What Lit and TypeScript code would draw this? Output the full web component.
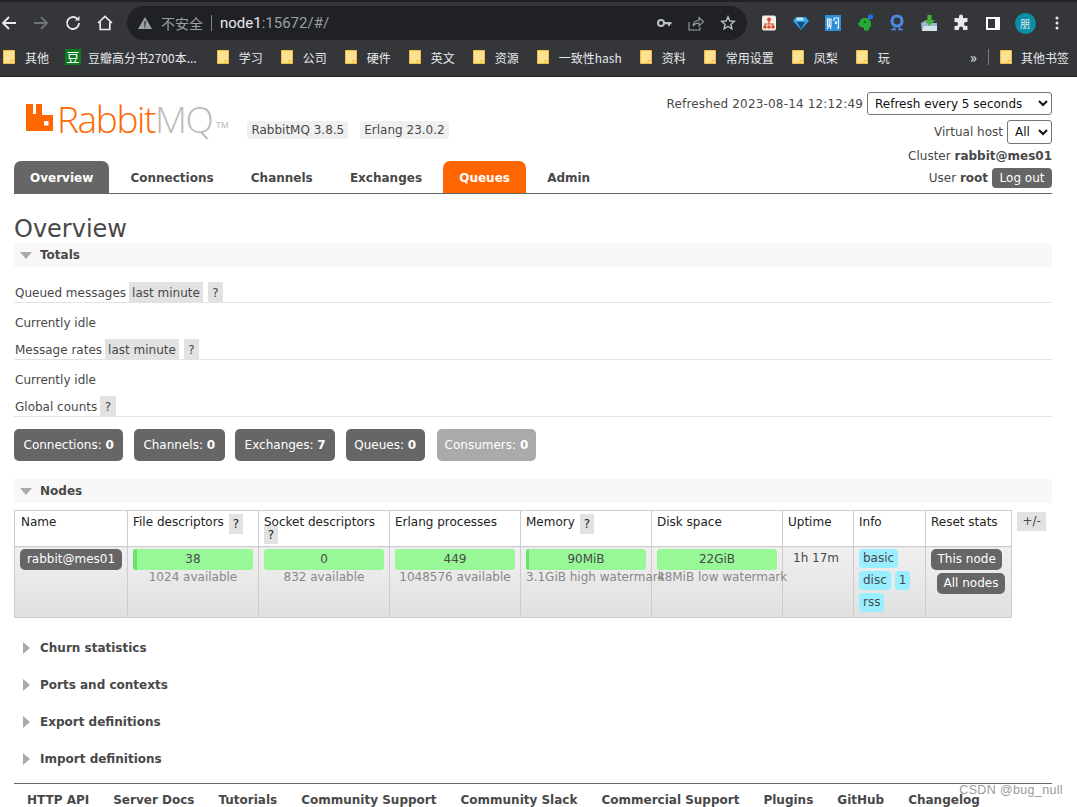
import { LitElement, html, css, svg } from "lit";
import { customElement } from "lit/decorators.js";

const folder = html`<svg class="folder" width="12" height="14" viewBox="0 0 12 14"><path d="M.5.5h11v13H.5z" fill="#fde293" stroke="#f2bd42"/><path d="M8 13.5v-3h3.5" fill="none" stroke="#f2bd42"/></svg>`;

const bookmarks: [string, number?][] = [["其他"], ["豆瓣高分书2700本...", 1], ["学习"], ["公司"], ["硬件"], ["英文"], ["资源"], ["一致性hash"], ["资料"], ["常用设置"], ["凤梨"], ["玩"]];

const ext = [
  svg`<rect x="2" y="1.500" width="14" height="15" rx="2" fill="#f3efe9"/><circle cx="9" cy="5.500" r="2" fill="#e0492c"/><path d="M9 7v3M5 13v-3h8v3" fill="none" stroke="#e0492c" stroke-width="1.200"/><circle cx="5" cy="13" r="1.800" fill="#e0492c"/><circle cx="9" cy="13" r="1.800" fill="#e0492c"/><circle cx="13" cy="13" r="1.800" fill="#e0492c"/>`,
  svg`<path d="M4 3h10l3 4-8 9-8-9z" fill="#2f9ee6"/><path d="M5.500 3.500h5l2 3h-9z" fill="#bfe6fb"/><path d="M5 8h8l-4 7z" fill="#0b4f80"/>`,
  svg`<rect x="1" y="1" width="16" height="16" fill="#2d8fd8"/><path d="M3.500 5h3.500v7H3.500zM5.200 5v7M3 15l2-3M7 15l-1-3M9.500 7l1-3h4v10h-2M11 8l2 2M13 7l-2 3" fill="none" stroke="#e8f2fb" stroke-width="1.200"/>`,
  svg`<path d="M2 9l2-1V6l3-2h5l3 4v4l-2 2v2l-3 1-2-1v-2l-3-1-2-1z" fill="#25a83a"/><circle cx="14.500" cy="2.800" r="2.600" fill="#1a73e8"/><circle cx="9" cy="8" r="1" fill="#0d5a1d"/>`,
  svg`<circle cx="9" cy="7" r="5" fill="none" stroke="#4d88e0" stroke-width="3.200"/><path d="M5 16l2-3.500M13 16l-2-3.500M3 15.500h5M10 15.500h5" fill="none" stroke="#4d88e0" stroke-width="1.300"/>`,
  svg`<path d="M1 9l6-3v3h10v8H2z" fill="#9db7cf"/><path d="M4 12h13v5H2z" fill="#d4e2ee"/><path d="M7.500 1h4v5H15l-5.500 6L4 6h3.500z" fill="#46b03f"/>`,
  svg`<path d="M7 2.500a2 2 0 0 1 4 0V4h4.500v4H14a2 2 0 0 0 0 4h1.500v4H11v-1.500a2 2 0 0 0-4 0V16H2.500v-4H4a2 2 0 0 0 0-4H2.500V4H7z" fill="#e8eaed"/>`,
  svg`<rect x="2" y="3" width="14" height="13" fill="#fff"/><rect x="4" y="5" width="7" height="9" fill="#35363a"/>`,
];

@customElement("app-root")
export class AppRoot extends LitElement {
  static styles = css`
    :host { display: block; height: 807px; overflow: hidden; position: relative; background: #fff;
      font-family: "DejaVu Sans", Verdana, sans-serif; font-size: 12px; color: #484848; }
    .tabstrip { height: 2px; background: #202124; }
    .toolbar { height: 42px; background: #35363a; display: flex; align-items: center; }
    .nav { width: 32px; display: flex; justify-content: center; }
    .nav.back { width: 18px; margin-right: 7px; }
    .omni { margin-left: 6px; width: 620px; height: 34px; border-radius: 17px; background: #202124; display: flex; align-items: center;
      padding: 0 10px; box-sizing: border-box; font: 14px "Noto Sans CJK SC", "Liberation Sans", sans-serif; color: #9aa0a6; }
    .omni .warn { margin-right: 8px; }
    .omni .insecure { font-size: 14px; }
    .omni .sep { width: 1px; height: 16px; background: #80868b; margin: 0 8px; }
    .omni .host { color: #e8eaed; }
    .omni .url { font-family: "Roboto", "Liberation Sans", sans-serif; font-size: 15px; }
    .omni .end { margin-left: auto; display: flex; gap: 16px; align-items: center; padding-right: 1px; }
    .exts { display: flex; align-items: center; margin-left: 13px; gap: 14px; }
    .avatar { width: 21px; height: 21px; border-radius: 50%; background: #0b8fa8; color: #e8eaed; font: 10px/21px "Noto Sans CJK SC", sans-serif; text-align: center; margin-left: -1.500px; }
    .dots { margin-left: 19.500px; }
    .bookbar { padding: 0 0 6px 3px; box-sizing: border-box; height: 33px; background: #35363a; border-bottom: 1px solid #1f1f21; display: flex; align-items: center;
      font: 12px "Noto Sans CJK SC", "Liberation Sans", sans-serif; color: #e8eaed; }
    .bm { display: flex; align-items: center; gap: 10px; margin-right: 18px; white-space: nowrap; }
    .bm:first-child { margin-right: 16px; }
    .bm.first-dou { gap: 7px; margin-right: 20px; }
    .dou { width: 16px; height: 16px; background: #0e7a22; color: #fff; font-size: 13px; line-height: 16px; text-align: center; }
    .folder { flex: none; }
    .bm-right { margin-left: auto; display: flex; align-items: center; padding-right: 8px; }
    .more { margin-right: 11px; font-size: 15px; line-height: 16px; }
    .bm-sep { width: 1px; height: 16px; background: #7a7d82; margin-right: 11px; }
    .bm-right .bm { margin-right: 0; gap: 9px; }

    .page { padding: 0 25px 0 14px; position: relative; }
    .head { display: flex; justify-content: space-between; height: 84px; }
    .brand { display: flex; align-items: flex-start; padding: 25px 0 0 12px; }
    .logo { display: flex; align-items: flex-end; height: 34px; font: 37px/34px "Open Sans", "Liberation Sans", sans-serif; letter-spacing: -1.400px; font-weight: 300; }
    .logo svg { margin: 0 4px 5px 0; }
    .rabbit { color: #f60; }
    .mq { color: #bbb; }
    .tm { font: 9px "Liberation Sans", sans-serif; color: #bbb; letter-spacing: 0; margin: 0 0 6px 3px; }
    .ver { display: flex; gap: 12px; margin: 19px 0 0 19px; }
    .ver span { background: #f0f0f0; border-radius: 3px; padding: 2px 4px; line-height: 14px; color: #484848; }
    .status { text-align: right; padding-top: 15px; line-height: 14px; }
    .status .row { display: flex; justify-content: flex-end; align-items: center; }
    .status .r1 { height: 23px; gap: 4px; }
    .status .r1 span { letter-spacing: .17px; }
    .status .r2 { height: 24px; gap: 4px; margin-top: 5px; }
    .status .r3 { height: 22px; margin-top: 1px; }
    .status select { font: 12px "DejaVu Sans", sans-serif; background: #fff; color: #111; border: 1px solid #767676; border-radius: 3px; height: 100%; padding: 0 0 0 3px; }
    .logout { background: #666; color: #fff; border-radius: 4px; padding: 0 7.500px; line-height: 20px; }

    nav { display: flex; border-bottom: 1px solid #666; height: 32px; align-items: stretch; position: relative; }
    nav a { padding: 0 16px; margin-right: 5.200px; font-weight: 700; line-height: 35px; font-size: 12px; color: #484848; border-radius: 7px 7px 0 0; }
    nav a.on { background: #666; color: #fff; }
    nav a.q { background: #f60; color: #fff; }
    nav .user { margin: 2px 0 0 auto; display: flex; align-items: center; gap: 4px; font-weight: 400; }

    h1 { font: 400 24px/28px "DejaVu Sans", sans-serif; margin: 21px 0 0; color: #484848; }
    .sec { background: #f8f8f8; height: 24px; display: flex; align-items: center; font-weight: 700; font-size: 12px; padding-left: 6px; gap: 8px; }
    .tri-d { width: 0; height: 0; border: 6px solid transparent; border-top: 7px solid #aaa; border-bottom: 0; margin-top: 1px; }
    .tri-r { width: 0; height: 0; border: 6px solid transparent; border-left: 7px solid #aaa; border-right: 0; margin-left: 3px; margin-right: 2px; }
    .lbl { display: flex; align-items: flex-start; gap: 3px; height: 20px; padding-left: 1px; border-bottom: 1px solid #e2e2e2; white-space: nowrap; line-height: 22px; }
    .tag { background: #e2e2e2; padding: 0 3px; height: 20px; }
    .q-mark { background: #e2e2e2; padding: 0 4.500px; height: 20px; line-height: 20px; margin-left: 1px; }
    .lbl .q-mark { margin-left: 2px; line-height: 22px; }
    .idle { line-height: 14px; padding-left: 1px; margin-top: 13px; }
    .l1 { margin-top: 15px; }
    .l2, .l3 { margin-top: 9px; }
    .counts { display: flex; gap: 10.500px; margin-top: 12px; }
    .counts span { background: #666; color: #fff; border-radius: 5px; padding: 0 9.500px; height: 32px; line-height: 32px; }
    .counts span.tight { padding: 0 8.500px; }
    .counts span.off { background: #aaa; margin-left: 1.500px; padding: 0 8px; }
    .counts b { font-weight: 700; }
    .nodes-head { margin-top: 18px; }
    .table-row { display: flex; align-items: flex-start; margin-top: 7px; gap: 5px; }
    table { border-collapse: collapse; table-layout: fixed; width: 997px; }
    th, td { border: 1px solid #ccc; box-sizing: border-box; font-weight: 400; text-align: left; padding: 0; vertical-align: top; white-space: nowrap; }
    th { height: 36px; padding: 4px 5px 0; line-height: 14px; color: #222; background: #fff; position: relative; }
    th:first-child { padding-left: 6px; }
    th .q-mark { display: inline-block; height: 20px; line-height: 20px; margin-left: 1px; padding: 0 4px; vertical-align: top; margin-top: -1px; }
    th .wrap { display: block; height: 14px; }
    th .under { display: block; height: 18px; line-height: 18px; width: 14px; text-align: center; background: #e2e2e2; margin-top: -3px; position: relative; }
    tr.body td { height: 71px; background: linear-gradient(#f0f0f0, #e0e0e0); padding: 2px 5px 0; }
    .pill { background: #666; color: #fff; border-radius: 5px; line-height: 21px; height: 21px; text-align: center; }
    .bar { background: #98f898; border-radius: 3px; height: 21px; line-height: 21px; text-align: center; color: #484848; position: relative; overflow: hidden; }
    .bar i { position: absolute; left: 0; top: 0; bottom: 0; background: #6ae26a; }
    .sub { text-align: center; color: #888; line-height: 15px; }
    .sub.left { text-align: left; }
    .up { padding-left: 5px; line-height: 18px; }
    .infos { display: flex; flex-wrap: wrap; gap: 3px 4px; width: 60px; }
    .infos span { background: #9ef; border-radius: 4px; padding: 0 4px; line-height: 19px; height: 19px; color: #484848; }
    .reset { display: flex; flex-direction: column; align-items: flex-start; gap: 3px; }
    .reset span { background: #666; color: #fff; border-radius: 5px; padding: 0 6.500px; line-height: 21px; height: 21px; }
    .reset span + span { margin-left: 6px; }
    .plus { flex: none; background: #e2e2e2; padding: 0 5.500px; line-height: 19px; height: 19px; margin-top: 2px; }
    .coll { margin-top: 19px; height: 18px; display: flex; align-items: center; gap: 8px; font-weight: 700; padding-left: 6px; }
    .coll.c1 { margin-top: 21px; }
    footer { margin-top: 15px; border-top: 1px solid #666; padding: 9px 0 0 13px; display: flex; gap: 24px; font-weight: 700; white-space: nowrap; line-height: 14px; }
    .mark { position: absolute; right: 14px; top: 783px; font: 12.500px "Liberation Sans", sans-serif; letter-spacing: .35px; color: #9a9a9a; }
  `;

  render() {
    return html`
      <div class="tabstrip"></div>
      <div class="toolbar">
        <div class="nav back"><svg width="18" height="18" viewBox="0 0 18 18" fill="none" stroke="#e8eaed" stroke-width="1.800"><path d="M16 9H3M9 3L3 9l6 6"/></svg></div>
        <div class="nav"><svg width="18" height="18" viewBox="0 0 18 18" fill="none" stroke="#6f7276" stroke-width="1.800"><path d="M2 9h13M9 3l6 6-6 6"/></svg></div>
        <div class="nav"><svg width="18" height="18" viewBox="0 0 18 18" fill="none" stroke="#e8eaed" stroke-width="1.800"><path d="M15 9a6 6 0 1 1-1.800-4.300"/><path d="M15.500 2v4.500H11" fill="#e8eaed" stroke="none"/></svg></div>
        <div class="nav"><svg width="18" height="18" viewBox="0 0 18 18" fill="none" stroke="#e8eaed" stroke-width="1.700"><path d="M2 9l7-6.500L16 9M4.200 8v7.500h9.600V8"/></svg></div>
        <div class="omni">
          <svg class="warn" width="16" height="16" viewBox="0 0 16 16"><path d="M8 2l7 12H1z" fill="#9aa0a6"/><path d="M7.400 6h1.200v4.500H7.400zM7.400 11.200h1.200v1.200H7.400z" fill="#202124"/></svg>
          <span class="insecure">不安全</span><span class="sep"></span>
          <span class="url"><span class="host">node1</span>:15672/#/</span>
          <span class="end">
            <svg width="15" height="10" viewBox="0 0 15 10"><circle cx="4" cy="5" r="3" fill="none" stroke="#bdc1c6" stroke-width="2"/><path d="M7 4h7.500v2.200h-1.500V8h-2V6.200H7z" fill="#bdc1c6"/></svg>
            <svg width="16" height="16" viewBox="0 0 16 16" fill="none" stroke="#9aa0a6" stroke-width="1.100"><path d="M1 7v8h11v-3M5 11c.5-3.500 3-5.500 6-5.500V2.500l4.500 4.300-4.500 4V8c-2.500 0-4.500 1-6 3z"/></svg>
            <svg width="16" height="16" viewBox="0 0 16 16" fill="none" stroke="#bdc1c6" stroke-width="1.400"><path d="M8 1.800l1.800 4.200 4.500.4-3.400 3 1 4.400L8 11.500l-3.900 2.300 1-4.400-3.400-3 4.500-.4z"/></svg>
          </span>
        </div>
        <div class="exts">
          ${ext.map((e) => html`<svg width="18" height="18" viewBox="0 0 18 18">${e}</svg>`)}
          <div class="avatar">朋</div>
        </div>
        <svg class="dots" width="4" height="14" viewBox="0 0 4 14" fill="#e8eaed"><circle cx="2" cy="2" r="1.500"/><circle cx="2" cy="7" r="1.500"/><circle cx="2" cy="12" r="1.500"/></svg>
      </div>
      <div class="bookbar">
        ${bookmarks.map(([t, d]) => html`<div class="bm ${d ? "first-dou" : ""}">${d ? html`<span class="dou">豆</span>` : folder}<span>${t}</span></div>`)}
        <div class="bm-right"><span class="more">»</span><span class="bm-sep"></span><div class="bm">${folder}<span>其他书签</span></div></div>
      </div>
      <div class="page">
        <div class="head">
          <div class="brand">
            <div class="logo">
              <svg width="27" height="27" viewBox="0 0 27 27"><path d="M0 0h7v10h3V0h6v11h11v16H0z" fill="#f60"/><rect x="18" y="17" width="4.500" height="4.500" fill="#fff"/></svg>
              <span class="rabbit">Rabbit</span><span class="mq">MQ</span><span class="tm">TM</span>
            </div>
            <div class="ver"><span>RabbitMQ 3.8.5</span><span>Erlang 23.0.2</span></div>
          </div>
          <div class="status">
            <div class="row r1"><span>Refreshed 2023-08-14 12:12:49</span>
              <select style="width:185px"><option>Refresh every 5 seconds</option></select></div>
            <div class="row r2"><span>Virtual host</span><select style="width:45px"><option>All</option></select></div>
            <div class="row r3"><span>Cluster <b>rabbit@mes01</b></span></div>
          </div>
        </div>
        <nav>
          <a class="on">Overview</a><a>Connections</a><a>Channels</a><a>Exchanges</a><a class="q">Queues</a><a>Admin</a>
          <div class="user"><span>User <b>root</b></span><span class="logout">Log out</span></div>
        </nav>
        <h1>Overview</h1>
        <div class="sec"><span class="tri-d"></span>Totals</div>
        <div class="lbl l1">Queued messages <span class="tag">last minute</span><span class="q-mark">?</span></div>
        <div class="idle">Currently idle</div>
        <div class="lbl l2">Message rates <span class="tag">last minute</span><span class="q-mark">?</span></div>
        <div class="idle">Currently idle</div>
        <div class="lbl l3">Global counts <span class="q-mark" style="margin-left:0">?</span></div>
        <div class="counts">
          <span>Connections: <b>0</b></span><span>Channels: <b>0</b></span><span>Exchanges: <b>7</b></span><span class="tight">Queues: <b>0</b></span><span class="off">Consumers: <b>0</b></span>
        </div>
        <div class="sec nodes-head"><span class="tri-d"></span>Nodes</div>
        <div class="table-row">
          <table>
            <colgroup><col style="width:113px"/><col style="width:131px"/><col style="width:131px"/><col style="width:131px"/><col style="width:131px"/><col style="width:131px"/><col style="width:71px"/><col style="width:72px"/><col style="width:86px"/></colgroup>
            <tr>
              <th>Name</th>
              <th>File descriptors <span class="q-mark">?</span></th>
              <th><span class="wrap">Socket descriptors</span><span class="under">?</span></th>
              <th>Erlang processes</th>
              <th>Memory <span class="q-mark">?</span></th>
              <th>Disk space</th>
              <th>Uptime</th>
              <th>Info</th>
              <th>Reset stats</th>
            </tr>
            <tr class="body">
              <td><div class="pill">rabbit@mes01</div></td>
              <td><div class="bar"><i style="width:4px"></i>38</div><div class="sub">1024 available</div></td>
              <td><div class="bar">0</div><div class="sub">832 available</div></td>
              <td><div class="bar">449</div><div class="sub">1048576 available</div></td>
              <td><div class="bar"><i style="width:3px"></i>90MiB</div><div class="sub left">3.1GiB high watermark</div></td>
              <td><div class="bar">22GiB</div><div class="sub left">48MiB low watermark</div></td>
              <td><div class="up">1h 17m</div></td>
              <td><div class="infos"><span>basic</span><span>disc</span><span>1</span><span>rss</span></div></td>
              <td><div class="reset"><span>This node</span><span>All nodes</span></div></td>
            </tr>
          </table>
          <span class="plus">+/-</span>
        </div>
        <div class="coll c1"><span class="tri-r"></span>Churn statistics</div>
        <div class="coll"><span class="tri-r"></span>Ports and contexts</div>
        <div class="coll"><span class="tri-r"></span>Export definitions</div>
        <div class="coll"><span class="tri-r"></span>Import definitions</div>
        <footer><span>HTTP API</span><span>Server Docs</span><span>Tutorials</span><span>Community Support</span><span>Community Slack</span><span>Commercial Support</span><span>Plugins</span><span>GitHub</span><span>Changelog</span></footer>
      </div>
      <div class="mark">CSDN @bug_null</div>
    `;
  }
}
